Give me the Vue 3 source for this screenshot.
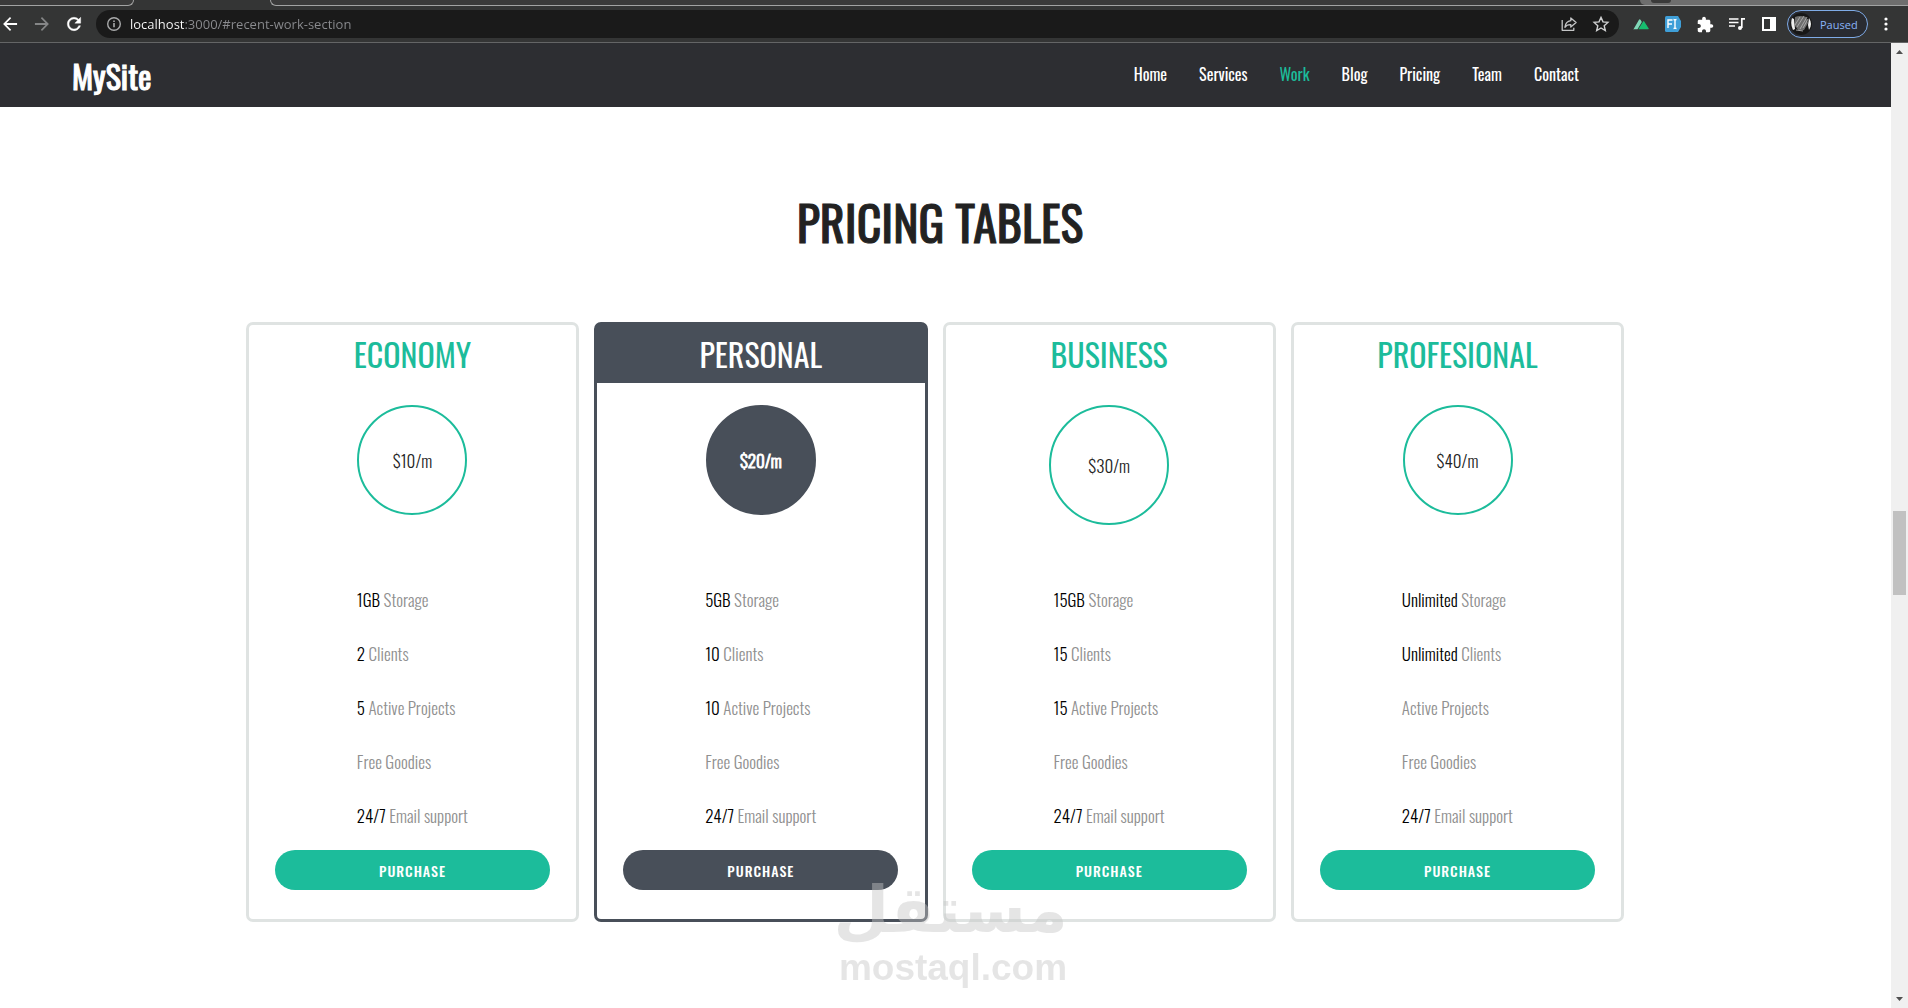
<script setup>
import { ref } from 'vue'

const url = ref('localhost:3000/#recent-work-section')

const navLinks = [
  { title: 'Home', href: '#home-section' },
  { title: 'Services', href: '#services-section' },
  { title: 'Work', href: '#recent-work-section', active: true },
  { title: 'Blog', href: '#blog-section' },
  { title: 'Pricing', href: '#pricing-section' },
  { title: 'Team', href: '#team-section' },
  { title: 'Contact', href: '#contact-section' },
]

const plans = [
  { name: 'Economy', price: '$10/m', storage: '1GB', clients: '2', projects: '5' },
  { name: 'Personal', price: '$20/m', storage: '5GB', clients: '10', projects: '10', featured: true },
  { name: 'Business', price: '$30/m', storage: '15GB', clients: '15', projects: '15', large: true },
  { name: 'Profesional', price: '$40/m', storage: 'Unlimited', clients: 'Unlimited', projects: '' },
]

function features(plan) {
  return [
    { amount: plan.storage, label: 'Storage' },
    { amount: plan.clients, label: 'Clients' },
    { amount: plan.projects, label: 'Active Projects' },
    { amount: '', label: 'Free Goodies' },
    { amount: '24/7', label: 'Email support' },
  ]
}
</script>

<template>
  <div class="window">
    <div class="browser">
      <div class="tabs">
        <div class="tab-left"></div>
        <div class="tab-right"><div class="tab-end"><span class="tab-dot"></span></div></div>
      </div>
      <div class="toolbar">
        <div class="nav-buttons">
          <button class="icon-btn" aria-label="Back">
            <svg width="20" height="20" viewBox="0 0 24 24" fill="#fff"><path d="M20.5 10.8H7.8l5.6-5.6L12 3.7 3.7 12l8.3 8.3 1.4-1.5-5.6-5.6h12.7z" /></svg>
          </button>
          <button class="icon-btn" aria-label="Forward">
            <svg width="20" height="20" viewBox="0 0 24 24" fill="#858687"><path d="M3.5 10.8h12.7l-5.6-5.6L12 3.7l8.3 8.3-8.3 8.3-1.4-1.5 5.6-5.6H3.5z" /></svg>
          </button>
          <button class="icon-btn" aria-label="Reload">
            <svg width="20" height="20" viewBox="0 0 24 24" fill="#fff" stroke="#fff" stroke-width=".5"><path d="M17.65 6.35C16.2 4.9 14.21 4 12 4c-4.42 0-7.99 3.58-7.99 8s3.57 8 7.99 8c3.73 0 6.84-2.55 7.73-6h-2.08c-.82 2.33-3.04 4-5.65 4-3.31 0-6-2.69-6-6s2.69-6 6-6c1.66 0 3.14.69 4.22 1.78L13 11h7V4l-2.35 2.35z" /></svg>
          </button>
        </div>
        <div class="address">
          <svg width="16" height="16" viewBox="0 0 16 16" fill="none" stroke="#a9aaab" stroke-width="1.4">
            <circle cx="8" cy="8" r="6.3" /><path d="M8 7v4.3M8 4.4v1.6" stroke-width="1.6" />
          </svg>
          <input v-model="url" class="url" type="text" aria-label="Address" spellcheck="false">
          <button class="icon-btn" aria-label="Share">
            <svg width="18" height="18" viewBox="0 0 18 18" fill="none" stroke="#c4c5c6" stroke-width="1.3" stroke-linejoin="round">
              <path d="M2.2 5v10.3h11.6v-2.6" /><path d="M10.8 3l5.3 4.6-5.3 4.5V9.6C8 9.5 6.1 10.4 4.9 12.3c.4-3.6 2.5-6.1 5.9-6.6z" />
            </svg>
          </button>
          <button class="icon-btn" aria-label="Bookmark">
            <svg width="18" height="18" viewBox="0 0 18 18" fill="none" stroke="#d0d1d2" stroke-width="1.4">
              <path d="M9 2.4l2 4.5 4.9.5-3.7 3.3 1.1 4.8L9 13l-4.3 2.5 1.1-4.8L2.1 7.4 7 6.9z" />
            </svg>
          </button>
        </div>
        <div class="extensions">
          <button class="icon-btn" aria-label="Nuxt">
            <svg width="18" height="18" viewBox="0 0 18 18">
              <path d="M1.5 14.3L7 4.7q.7-1 1.5 0l1.3 2.2-4.3 7.4H2.2q-1 0-.7-.7z" fill="#80d8b8" />
              <path d="M6.3 14.3l4.9-7.9q.5-.8 1 0l4.5 7.2q.3.7-.6.7z" fill="#17bd6f" />
            </svg>
          </button>
          <button class="icon-btn" aria-label="Form filler">
            <svg width="18" height="18" viewBox="0 0 18 18">
              <path d="M2.5 1H14l3 5v6l-3 5H2.5Q1 17 1 15.5v-13Q1 1 2.5 1z" fill="#3f9fd8" />
              <path d="M4 13V5h4.5M4 9h4M9.5 4.500q1.500 0 1.500 1v7q0 1-1.500 1M12.500 4.500q-1.500 0-1.500 1m0 7q0 1 1.500 1" fill="none" stroke="#fff" stroke-width="1.4" />
            </svg>
          </button>
          <button class="icon-btn" aria-label="Extensions">
            <svg width="17" height="17" viewBox="1 0 23 23" fill="#fff"><path d="M20.5 11H19V7c0-1.1-.9-2-2-2h-4V3.5C13 2.12 11.88 1 10.5 1S8 2.12 8 3.5V5H4c-1.1 0-1.99.9-1.99 2v3.8H3.5c1.49 0 2.7 1.21 2.7 2.7s-1.21 2.7-2.7 2.7H2V20c0 1.1.9 2 2 2h3.8v-1.5c0-1.49 1.21-2.7 2.7-2.7s2.7 1.21 2.7 2.7V22H17c1.1 0 2-.9 2-2v-4h1.5c1.38 0 2.5-1.12 2.5-2.5S21.88 11 20.5 11z" /></svg>
          </button>
          <button class="icon-btn" aria-label="Media">
            <svg width="18" height="18" viewBox="0 0 18 18" fill="none" stroke="#fff" stroke-width="1.7">
              <path d="M1 4h9.5M1 7.5h9.5M1 11h6M17 3.800h-3.200V13" /><circle cx="12" cy="13" r="2" fill="#fff" stroke="none" />
            </svg>
          </button>
          <button class="icon-btn" aria-label="Side panel">
            <svg width="18" height="18" viewBox="0 0 18 18"><path d="M2 2h14v14H2zM4 4v10h6V4z" fill="#fff" fill-rule="evenodd" /></svg>
          </button>
        </div>
        <button class="profile">
          <svg width="22" height="22" viewBox="0 0 22 22">
            <circle cx="11" cy="11" r="11" fill="#171717" />
            <path d="M2 5Q0 11 3 17l2-1L4 6zM19 5q4 6 0 12l-1-5z" fill="#eee" />
            <path d="M5 4q5-2 11 0l2 6-4 7-5 1-4-5z" fill="#6d6d6d" />
            <path d="M7 14l7-11M10 16l7-12M5 12l5-8M13 15l5-9M6 17l7 1" stroke="#b5b5b5" stroke-width=".8" fill="none" />
          </svg>
          <span>Paused</span>
        </button>
        <button class="icon-btn" aria-label="Menu">
          <svg width="18" height="18" viewBox="0 0 18 18" fill="#fff"><circle cx="9" cy="4" r="1.6" /><circle cx="9" cy="9" r="1.6" /><circle cx="9" cy="14" r="1.6" /></svg>
        </button>
      </div>
    </div>

    <div class="viewport">
      <div class="page">
        <header class="header">
          <a class="logo" href="#">MySite</a>
          <nav class="menu">
            <a v-for="link in navLinks" :key="link.title" :href="link.href" :class="{ active: link.active }">{{ link.title }}</a>
          </nav>
        </header>

        <main class="pricing">
          <h1>Pricing Tables</h1>
          <div class="plans">
            <section v-for="plan in plans" :key="plan.name" class="plan" :class="{ featured: plan.featured }">
              <h2>{{ plan.name }}</h2>
              <div class="price-row">
                <div class="price" :class="{ large: plan.large }">{{ plan.price }}</div>
              </div>
              <ul>
                <li v-for="f in features(plan)" :key="f.label"><strong v-if="f.amount">{{ f.amount }}&nbsp;</strong>{{ f.label }}</li>
              </ul>
              <button class="purchase">Purchase</button>
            </section>
          </div>
        </main>

        <div class="watermark">
          <div class="mark-ar" lang="ar" dir="rtl">مستقل</div>
          <div class="mark-en">mostaql.com</div>
        </div>
      </div>

      <div class="scrollbar">
        <svg width="17" height="17" viewBox="0 0 17 17" fill="#505050"><path d="M5 11l3.5-4 3.5 4z" /></svg>
        <div class="track-above"></div>
        <div class="thumb"></div>
        <div class="track-below"></div>
        <svg width="17" height="17" viewBox="0 0 17 17" fill="#505050"><path d="M5 6l3.5 4L12 6z" /></svg>
      </div>
    </div>
  </div>
</template>

<style>
body {
  margin: 0;
  overflow: hidden;
}
</style>

<style scoped>
.window {
  display: flex;
  flex-direction: column;
  height: 100vh;
  background: #fff;
  font-family: Oswald, "Roboto Condensed", "Liberation Sans", sans-serif;
}

a {
  color: inherit;
  text-decoration: none;
}

button {
  border: 0;
  padding: 0;
  background: none;
  font-family: inherit;
  cursor: pointer;
}

/* browser chrome */
.browser {
  flex: none;
  background: #343535;
  border-bottom: 1px solid #646566;
}

.tabs {
  display: flex;
  justify-content: space-between;
  gap: 136px;
  height: 6px;
}

.tab-left,
.tab-right {
  box-sizing: border-box;
  border-bottom: 1px solid #a2a3a3;
  background: #3a3a3a;
}

.tab-left {
  width: 134px;
  border-right: 1px solid #a2a3a3;
  border-bottom-right-radius: 8px;
}

.tab-right {
  flex: 1;
  display: flex;
  justify-content: flex-end;
  border-left: 1px solid #a2a3a3;
  border-bottom-left-radius: 8px;
}

.tab-end {
  width: 268px;
  height: 5px;
  overflow: hidden;
  background: #6e6e6e;
  border-bottom-left-radius: 5px;
}

.tab-dot {
  display: block;
  width: 20px;
  height: 3px;
  margin-left: 11px;
  background: #3a3a3a;
  border-radius: 0 0 10px 10px;
}

.toolbar {
  display: flex;
  align-items: center;
  height: 36px;
  padding-right: 12px;
}

.icon-btn {
  display: flex;
  align-items: center;
  justify-content: center;
  flex: none;
  width: 20px;
  height: 20px;
}

.nav-buttons {
  display: flex;
  gap: 12px;
  margin-right: 12px;
}

.address {
  display: flex;
  align-items: center;
  flex: 1;
  box-sizing: border-box;
  height: 28px;
  padding: 0 8px 0 10px;
  gap: 12px;
  border-radius: 14px;
  background: #1a1a1a;
}

.url {
  flex: 1;
  min-width: 0;
  height: 24px;
  margin-left: -4px;
  padding: 0;
  border: 0;
  outline: 0;
  font: 13px "Open Sans", sans-serif;
  color: transparent;
  background: linear-gradient(90deg, #fff 55px, #8b8c90 55px);
  background-clip: text;
  -webkit-background-clip: text;
}

.extensions {
  display: flex;
  gap: 12px;
  margin: 0 8px 0 12px;
}

.profile {
  display: flex;
  align-items: center;
  box-sizing: border-box;
  width: 81px;
  height: 28px;
  padding: 0 2px;
  gap: 8px;
  margin-right: 8px;
  border: 1px solid #7fabe8;
  border-radius: 14px;
  background: #292b31;
  color: #8ab4f8;
  font: 11px "Open Sans", sans-serif;
}

/* site */
.viewport {
  display: flex;
  flex: 1;
  min-height: 0;
}

.page {
  position: relative;
  flex: 1;
  min-width: 0;
  overflow: hidden;
}

.header {
  display: flex;
  align-items: center;
  justify-content: space-between;
  height: 64px;
  padding: 0 16.5% 0 72px;
  background: #2d2e32;
  color: #fff;
}

.logo {
  font-size: 32px;
  -webkit-text-stroke: 1px;
}

.menu {
  display: flex;
  gap: 32px;
  padding-bottom: 2px;
  font-size: 16px;
  line-height: 24px;
}

.menu .active {
  color: #1cbc9b;
}

.pricing {
  padding: 79px calc(13% + 21px) 0 13%;
}

h1 {
  margin: 0 0 64px;
  padding-left: 10px;
  color: #222;
  font-size: 48px;
  font-weight: 400;
  line-height: 72px;
  text-align: center;
  text-transform: uppercase;
  -webkit-text-stroke: 1px;
}

.plans {
  display: grid;
  grid-template-columns: repeat(4, 1fr);
  gap: 15px;
}

.plan {
  display: flex;
  flex-direction: column;
  padding-bottom: 29px;
  border: 3px solid #dfe3e2;
  border-radius: 7px;
}

h2 {
  margin: 0;
  color: #1cbc9b;
  font-size: 32px;
  font-weight: 400;
  line-height: 58px;
  text-align: center;
  text-transform: uppercase;
}

.price-row {
  height: 168px;
  padding-top: 22px;
}

.price {
  display: flex;
  align-items: center;
  justify-content: center;
  box-sizing: border-box;
  width: 110px;
  height: 110px;
  margin: 0 auto;
  border: 2px solid #1cbc9b;
  border-radius: 50%;
  color: #222;
  font-size: 17px;
  font-weight: 300;
}

.price.large {
  width: 120px;
  height: 120px;
}

ul {
  margin: 0 0 7px;
  padding: 0 0 0 33%;
  list-style: none;
}

li {
  color: #909090;
  font-size: 17px;
  font-weight: 300;
  line-height: 54px;
  white-space: nowrap;
}

strong {
  color: #000;
  font-weight: 300;
}

.purchase {
  height: 40px;
  margin: 0 8%;
  border-radius: 20px;
  background: #1cbc9b;
  color: #fff;
  font-size: 14px;
  font-weight: 500;
  letter-spacing: 1px;
  text-transform: uppercase;
}

.featured {
  border-color: #484f59;
}

.featured h2,
.featured .price,
.featured .purchase {
  background: #484f59;
  color: #fff;
}

.featured .price {
  border-color: #484f59;
  -webkit-text-stroke: 1px;
}

/* watermark lies over the cards */
.watermark {
  position: absolute;
  left: 50%;
  bottom: 19px;
  width: 229px;
  margin-left: -107px;
  color: #c6c6c6;
  opacity: 0.44;
  text-align: center;
  white-space: nowrap;
  pointer-events: none;
}

.mark-ar {
  font: bold 64px/74px "DejaVu Sans", sans-serif;
}

.mark-en {
  font: bold 37px/42px "Liberation Sans", Arial, sans-serif;
}

/* scrollbar */
.scrollbar {
  display: flex;
  flex-direction: column;
  flex: none;
  width: 17px;
  background: #f0f0f0;
}

.scrollbar svg {
  flex: none;
}

.thumb {
  height: 84px;
  margin: 0 2px;
  background: #c1c1c1;
}

.track-above {
  flex: 451;
}

.track-below {
  flex: 396;
}
</style>
